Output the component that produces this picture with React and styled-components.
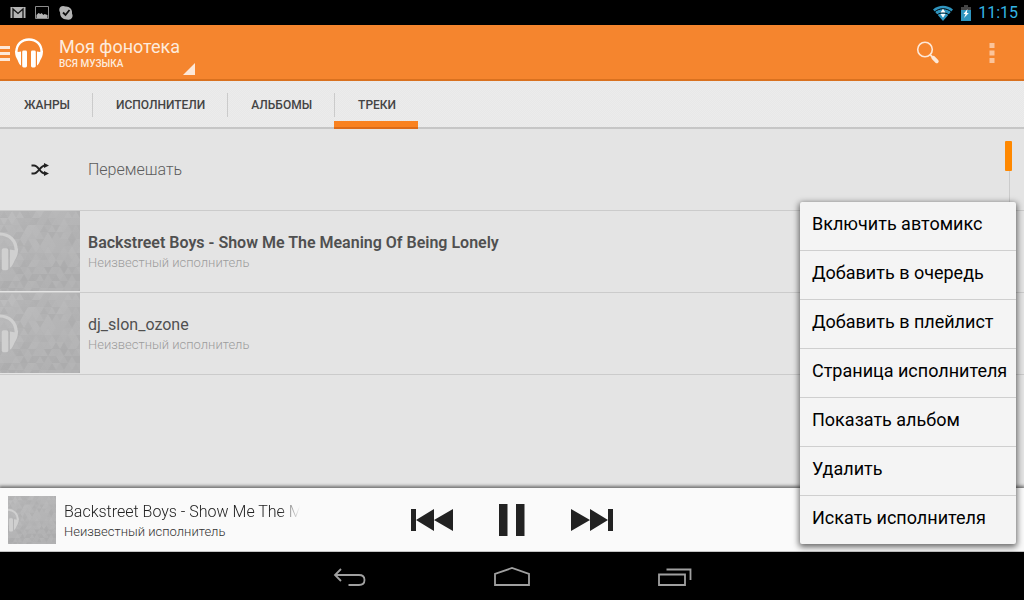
import React, { useState } from 'react';
import styled, { createGlobalStyle } from 'styled-components';

const tabs = ['Жанры', 'Исполнители', 'Альбомы', 'Треки'];

const tracks = [
  { id: 1, title: 'Backstreet Boys - Show Me The Meaning Of Being Lonely', artist: 'Неизвестный исполнитель', playing: true },
  { id: 2, title: 'dj_slon_ozone', artist: 'Неизвестный исполнитель', playing: false },
];

const menuItems = [
  'Включить автомикс',
  'Добавить в очередь',
  'Добавить в плейлист',
  'Страница исполнителя',
  'Показать альбом',
  'Удалить',
  'Искать исполнителя',
];

const TRI_W = 8;
const TRI_H = 7;

// Pseudo-random triangles for the default cover
const triangles = [];
for (let row = 0; row < 12; row++) {
  for (let col = -1; col < 21; col++) {
    const noise = Math.abs(Math.sin(row * 12.9898 + col * 78.233) * 43758.5453) % 1;
    const x = (col * TRI_W) / 2;
    const y = row * TRI_H;
    const up = (row + col) % 2 === 0;
    const points = up
      ? `${x},${y + TRI_H} ${x + TRI_W},${y + TRI_H} ${x + TRI_W / 2},${y}`
      : `${x},${y} ${x + TRI_W},${y} ${x + TRI_W / 2},${y + TRI_H}`;
    triangles.push({ key: `${row}_${col}`, points, light: noise > 0.4, opacity: Math.abs(noise - 0.4) * 0.09 });
  }
}

const HeadphonesShape = ({ color }) => (
  <g fill={color}>
    <path d="M1.400 14C1.400 6.500 6.500 1.500 14 1.500S26.600 6.500 26.600 14" fill="none" stroke={color} strokeWidth="2.400" />
    <path d="M0 12.500l2.800 1.500 3.200-.5v14C3.800 26.500 3.400 23 1.500 20 .4 18 0 15.500 0 12.500z" />
    <path d="M28 12.500L25.200 14l-3.200-.5v14c2.200-1 2.600-4.500 4.500-7.500 1.100-2 1.500-4.500 1.500-7.500z" />
    <rect x="7.200" y="12.500" width="4.800" height="17" rx="1.400" />
    <rect x="16" y="12.500" width="4.800" height="17" rx="1.400" />
  </g>
);

const CoverArt = ({ size }) => (
  <Cover width={size} height={size} viewBox="0 0 80 80" aria-hidden="true">
    <defs>
      <linearGradient id={`cover${size}`} x1="0" y1="0" x2="0.600" y2="1">
        <stop offset="0" stopColor="#bababb" />
        <stop offset="1" stopColor="#b1b1b2" />
      </linearGradient>
    </defs>
    <rect width="80" height="80" fill={`url(#cover${size})`} />
    {triangles.map((t) => (
      <polygon key={t.key} points={t.points} fill={t.light ? '#fff' : '#000'} opacity={t.opacity} />
    ))}
    <g transform="translate(-20 21) scale(1.360 1.300)">
      <HeadphonesShape color="#d0d0d0" />
    </g>
  </Cover>
);

const App = () => {
  const [activeTab, setActiveTab] = useState('Треки');

  return (
    <Page>
      <GlobalStyle />

      <StatusBar>
        <StatusGroup $gap={8}>
          <svg width="16" height="13" viewBox="0 0 16 13">
            <path d="M0.500 1h15v11h-15z" fill="#b4b4b4" />
            <path d="M3 12V3l5 4.500L13 3v9" fill="none" stroke="#151515" strokeWidth="1.300" />
          </svg>
          <svg width="16" height="16" viewBox="0 0 16 16">
            <path d="M1.500 1.500h13v12h-13z" fill="none" stroke="#8c8c8c" />
            <path d="M2.500 13v-3l2-2 2 1 1-1 2 2 1-1 3 1v3z" fill="#b4b4b4" />
          </svg>
          <svg width="16" height="16" viewBox="0 0 16 16">
            <path d="M5 1c1 0 1.800.2 2.500.6C11.500 1.300 14.600 4.600 14 8.600c2 3.600-1.300 7.400-5 5.900C5 14.800 1.800 11.600 2.100 7.500.1 4.300 2 1 5 1z" fill="#b4b4b4" />
            <path d="M5 7.500L7.500 10l4-5" fill="none" stroke="#101010" strokeWidth="1.800" />
          </svg>
        </StatusGroup>
        <StatusGroup $gap={6}>
          <svg width="22" height="16" viewBox="0 0 22 16">
            <path d="M1 4.500C7-.5 15-.5 21 4.500L11 16z" fill="#2f95bf" />
            <g fill="none" stroke="#000" strokeWidth="1">
              <path d="M2.500 7c5-4.300 12-4.300 17 0" />
              <path d="M5 10c3.500-3 8.500-3 12 0" />
            </g>
            <path d="M8.500 7.500L11 3.800l2.500 3.700zM8.500 9h5L11 12.700z" fill="#fff" />
          </svg>
          <svg width="12" height="16" viewBox="0 0 12 16">
            <path d="M4 0h4v2h3v4H1V2h3z" fill="#444" />
            <path d="M1 5h10v11H1z" fill="#2f95bf" />
            <path d="M7.500 4L3.500 9h2l-1.500 4L8.800 8h-2z" fill="#fff" />
          </svg>
          <Clock>11:15</Clock>
        </StatusGroup>
      </StatusBar>

      <AppBar>
        <IconButton aria-label="Меню" $width={48}>
          <svg width="48" height="32" viewBox="0 0 48 32">
            <path d="M0 10h10v3H0zM0 16h10v3H0zM0 22h10v3H0z" fill="#fde8d8" />
            <g transform="translate(15 2)">
              <HeadphonesShape color="#fff" />
            </g>
          </svg>
        </IconButton>
        <LibraryPicker>
          <PickerText>
            <PickerTitle>Моя фонотека</PickerTitle>
            <PickerSubtitle>ВСЯ МУЗЫКА</PickerSubtitle>
          </PickerText>
          <svg width="12" height="12" viewBox="0 0 12 12">
            <path d="M12 0v12H0z" fill="#fde8d8" />
          </svg>
        </LibraryPicker>
        <Spacer />
        <IconButton aria-label="Поиск" $width={64}>
          <svg width="24" height="24" viewBox="0 0 24 24">
            <circle cx="9" cy="9.500" r="7.300" fill="none" stroke="#fde8d8" strokeWidth="1.600" />
            <path d="M14.300 14.800l2 2" stroke="#fde8d8" strokeWidth="1.800" />
            <path d="M17.200 17.700l3.600 3.600" stroke="#fde8d8" strokeWidth="3.800" strokeLinecap="round" />
          </svg>
        </IconButton>
        <IconButton aria-label="Ещё" $width={64}>
          <svg width="6" height="24" viewBox="0 0 6 24">
            <path d="M0.500 3h5v5h-5zM0.500 10.500h5v5h-5zM0.500 18h5v5h-5z" fill="#fbc49b" />
          </svg>
        </IconButton>
      </AppBar>

      <Tabs>
        {tabs.map((tab) => (
          <Tab key={tab} $active={tab === activeTab} onClick={() => setActiveTab(tab)}>
            {tab}
          </Tab>
        ))}
      </Tabs>

      <TrackList>
        <Row>
          <ShuffleIcon>
            <svg width="20" height="14" viewBox="0 0 20 14">
              <g fill="none" stroke="#222" strokeWidth="1.800">
                <path d="M1.500 2.500H4c4.500 0 6 8 11 8" />
                <path d="M1.500 10.500H4c4.500 0 6-8 11-8" />
              </g>
              <path d="M14 0l5 2.500L14 5zM14 8l5 2.500-5 2.500z" fill="#222" />
            </svg>
          </ShuffleIcon>
          <ShuffleLabel>Перемешать</ShuffleLabel>
        </Row>
        {tracks.map((track) => (
          <Row key={track.id}>
            <CoverArt size={80} />
            <TrackText>
              <TrackTitle $playing={track.playing}>{track.title}</TrackTitle>
              <TrackArtist>{track.artist}</TrackArtist>
            </TrackText>
          </Row>
        ))}
        <ScrollTrack>
          <ScrollThumb />
        </ScrollTrack>
      </TrackList>

      <Player>
        <NowPlaying>
          <CoverArt size={48} />
          <NowText>
            <NowTitle>Backstreet Boys - Show Me The Meaning Of Being Lonely</NowTitle>
            <NowArtist>Неизвестный исполнитель</NowArtist>
          </NowText>
        </NowPlaying>
        <Controls>
          <IconButton aria-label="Предыдущий" $width={80}>
            <svg width="44" height="24" viewBox="0 0 44 24">
              <path d="M1 1h5v22H1zM24 1v22L6 12zM43 1v22L24 12z" fill="#222" />
            </svg>
          </IconButton>
          <IconButton aria-label="Пауза" $width={80}>
            <svg width="26" height="32" viewBox="0 0 26 32">
              <path d="M0 0h8.500v32H0zM17 0h8.500v32H17z" fill="#222" />
            </svg>
          </IconButton>
          <IconButton aria-label="Следующий" $width={80}>
            <svg width="44" height="24" viewBox="0 0 44 24">
              <path d="M43 1h-5v22h5zM20 1v22l18-11zM1 1v22l19-11z" fill="#222" />
            </svg>
          </IconButton>
        </Controls>
      </Player>

      <NavBar>
        <IconButton aria-label="Назад" $width={163}>
          <svg width="34" height="20" viewBox="0 0 34 20">
            <path d="M9 3L3 9l6 6M3 9h24c3.500 0 5.500 1.500 5.500 5s-2 5-5.500 5H16.500" fill="none" stroke="#a0a0a0" strokeWidth="1.800" />
          </svg>
        </IconButton>
        <IconButton aria-label="Домой" $width={163}>
          <svg width="36" height="20" viewBox="0 0 36 20">
            <path d="M1 19V8L18 2l17 6v11z" fill="none" stroke="#a0a0a0" strokeWidth="1.800" />
          </svg>
        </IconButton>
        <IconButton aria-label="Недавние" $width={163}>
          <svg width="34" height="20" viewBox="0 0 34 20">
            <path d="M1 8.500h26V19H1zM8.500 3.500h24V14" fill="none" stroke="#a0a0a0" strokeWidth="1.800" />
          </svg>
        </IconButton>
      </NavBar>

      <ContextMenu>
        {menuItems.map((item) => (
          <MenuItem key={item}>{item}</MenuItem>
        ))}
      </ContextMenu>
    </Page>
  );
};

export default App;

const GlobalStyle = createGlobalStyle`
  * {
    box-sizing: border-box;
  }

  body {
    margin: 0;
    background: #000;
    font-family: Roboto, 'Noto Sans', sans-serif;
  }

  button {
    font-family: inherit;
    border: none;
    padding: 0;
    cursor: pointer;
  }

  svg {
    display: block;
    flex-shrink: 0;
  }
`;

const Page = styled.div`
  position: relative;
  display: flex;
  flex-direction: column;
  min-height: 100vh;
  background: #e4e4e4;
`;

const StatusBar = styled.div`
  display: flex;
  align-items: center;
  justify-content: space-between;
  height: 25px;
  padding: 0 6px 0 10px;
  background: #000;
`;

const StatusGroup = styled.div`
  display: flex;
  align-items: center;
  gap: ${({ $gap }) => $gap}px;
`;

const Clock = styled.span`
  font-size: 16px;
  line-height: 24px;
  color: #33b5e5;
`;

const AppBar = styled.header`
  display: flex;
  align-items: stretch;
  height: 56px;
  background: #f5852e;
  border-bottom: 2px solid #d9711f;
`;

const IconButton = styled.button`
  display: flex;
  align-items: center;
  justify-content: center;
  width: ${({ $width }) => $width}px;
  background: none;
`;

const LibraryPicker = styled.button`
  display: flex;
  align-items: flex-end;
  gap: 3px;
  padding: 0 0 4px 11px;
  background: none;
  color: #fdebdd;
  text-align: left;
`;

const PickerText = styled.span`
  display: flex;
  flex-direction: column;
  padding-bottom: 5px;
`;

const PickerTitle = styled.span`
  font-size: 18px;
  line-height: 22px;
`;

const PickerSubtitle = styled.span`
  font-size: 10px;
  line-height: 12px;
  font-weight: 500;
`;

const Spacer = styled.div`
  flex: 1;
`;

const Tabs = styled.nav`
  display: flex;
  height: 48px;
  background: conic-gradient(#ececec 25%, #e8e8e8 0 50%, #ececec 0 75%, #e8e8e8 0) 0 0 / 2px 2px;
  border-bottom: 2px solid #c6c6c6;
`;

const Tab = styled.button`
  height: 48px;
  padding: 0 22px 0 24px;
  font-size: 12px;
  font-weight: 500;
  line-height: 16px;
  text-transform: uppercase;
  color: #444;
  background: none;
  box-shadow: ${({ $active }) => ($active ? 'inset 0 -2px #dd6c18, inset 0 -8px #f98220' : 'none')};

  & + & {
    background: linear-gradient(#cbcbcb, #cbcbcb) left center / 1px 24px no-repeat;
  }
`;

const TrackList = styled.main`
  position: relative;
  flex: 1;
`;

const Row = styled.div`
  display: flex;
  height: 82px;
  border-bottom: 1px solid #cbcbcb;
`;

const Cover = styled.svg`
  overflow: hidden;
`;

const ShuffleIcon = styled.div`
  display: flex;
  align-items: center;
  justify-content: center;
  width: 80px;
`;

const ShuffleLabel = styled.button`
  flex: 1;
  padding-left: 8px;
  font-size: 16px;
  font-weight: 300;
  text-align: left;
  color: #5c5c5c;
  background: none;
`;

const TrackText = styled.div`
  display: flex;
  flex-direction: column;
  justify-content: center;
  padding: 2px 0 0 8px;
`;

const TrackTitle = styled.span`
  font-size: 16px;
  line-height: 20px;
  font-weight: ${({ $playing }) => ($playing ? 600 : 400)};
  color: #505050;
`;

const TrackArtist = styled.span`
  font-size: 13px;
  line-height: 20px;
  font-weight: 300;
  color: #9c9c9c;
`;

const ScrollTrack = styled.div`
  position: absolute;
  top: 12px;
  right: 12px;
  bottom: 12px;
  width: 7px;
  background: linear-gradient(#cbcbcb, #cbcbcb) 4px 0 / 1px 100% no-repeat;
`;

const ScrollThumb = styled.div`
  height: 30px;
  border-radius: 1px;
  background: #ff8800;
`;

const Player = styled.section`
  position: relative;
  display: grid;
  grid-template-columns: 1fr auto 1fr;
  height: 64px;
  background: #fafafa;
  border-bottom: 1px solid #c4c4c4;
  box-shadow: 0 -1px 3px 1px rgba(0, 0, 0, 0.5);
`;

const NowPlaying = styled.div`
  display: flex;
  align-items: center;
  gap: 8px;
  padding-left: 8px;
`;

const NowText = styled.div`
  display: flex;
  flex-direction: column;
  width: 236px;
  padding-top: 4px;
`;

const NowTitle = styled.span`
  overflow: hidden;
  white-space: nowrap;
  font-size: 16px;
  line-height: 20px;
  font-weight: 300;
  color: #222;
  mask-image: linear-gradient(to left, transparent, #000 20px);
`;

const NowArtist = styled.span`
  font-size: 13px;
  line-height: 20px;
  font-weight: 300;
  color: #333;
`;

const Controls = styled.div`
  display: flex;
`;

const NavBar = styled.nav`
  display: flex;
  justify-content: center;
  height: 48px;
  background: #000;
`;

const ContextMenu = styled.div`
  position: absolute;
  right: 8px;
  bottom: 56px;
  display: flex;
  flex-direction: column;
  width: 216px;
  border-radius: 2px;
  background: #f4f4f4;
  box-shadow: 0 2px 6px 1px rgba(0, 0, 0, 0.6);
`;

const MenuItem = styled.button`
  height: 49px;
  padding: 0 8px 4px 12px;
  font-size: 18px;
  line-height: 24px;
  text-align: left;
  white-space: nowrap;
  color: #000;
  background: none;
  border-bottom: 1px solid #cfcfcf;

  &:last-child {
    height: 48px;
    border-bottom: none;
  }
`;
